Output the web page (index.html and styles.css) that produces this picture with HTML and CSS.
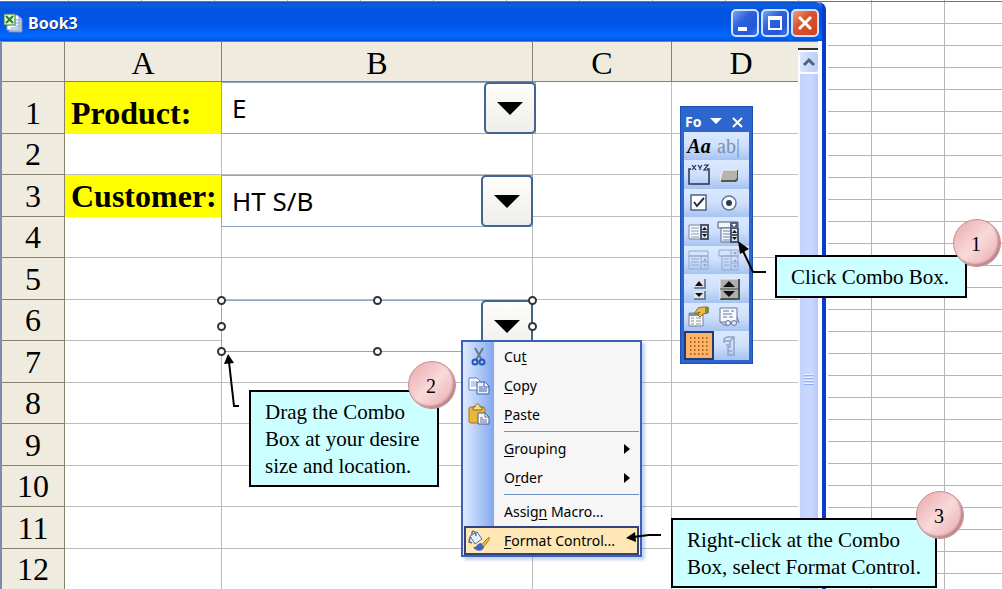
FILE: index.html
```html
<!DOCTYPE html>
<html lang="en">
<head>
    <meta charset="UTF-8">
    <meta name="viewport" content="width=device-width, initial-scale=1.0">
    <title>Book3</title>
    <link rel="stylesheet" href="styles.css">
</head>
<body>
    <main class="desktop">
        <section class="book">
            <header class="title-bar">
                <svg class="book-icon" width="20" height="20" viewBox="0 0 20 20">
                    <path d="M6 3h10l3 3v13H6z" fill="#b9cbe9" stroke="#6d87b5"/>
                    <path d="M4 2h10l2 2v13H4z" fill="#f4f8ff" stroke="#8fa6cc"/>
                    <path d="M12 7h5M12 10h5M12 13h5M8 15h7" stroke="#8ba4d0"/>
                    <rect x="1" y="1" width="11" height="11" fill="#e6f3dc" stroke="#2e7c35"/>
                    <path d="M3 3l7 7M10 3l-7 7" stroke="#23832c" stroke-width="2"/>
                </svg>
                <h1>Book3</h1>
                <div class="window-buttons">
                    <button class="window-btn" aria-label="Minimize">
                        <svg width="24" height="24" viewBox="0 0 24 24"><rect x="5" y="16" width="9" height="4" fill="#fff"/></svg>
                    </button>
                    <button class="window-btn" aria-label="Maximize">
                        <svg width="24" height="24" viewBox="0 0 24 24"><path d="M5 5h14v14H5zM7 9v8h10V9z" fill="#fff" fill-rule="evenodd"/></svg>
                    </button>
                    <button class="window-btn close" aria-label="Close">
                        <svg width="24" height="24" viewBox="0 0 24 24"><path d="M6 6l12 12M18 6L6 18" stroke="#fff" stroke-width="3"/></svg>
                    </button>
                </div>
            </header>

            <div class="book-body">
                <table class="sheet">
                    <colgroup>
                        <col class="col-head"><col class="col-a"><col class="col-b"><col class="col-c"><col>
                    </colgroup>
                    <thead>
                        <tr><th></th><th>A</th><th>B</th><th>C</th><th class="last">D</th></tr>
                    </thead>
                    <tbody>
                        <tr>
                            <th>1</th>
                            <td class="key"><label for="product">Product:</label></td>
                            <td class="has-combo">
                                <div class="combo combo-wide">
                                    <select id="product"><option>E</option></select>
                                    <span class="combo-arrow"></span>
                                </div>
                            </td>
                            <td></td><td></td>
                        </tr>
                        <tr><th>2</th><td></td><td></td><td></td><td></td></tr>
                        <tr>
                            <th>3</th>
                            <td class="key"><label for="customer">Customer:</label></td>
                            <td class="has-combo">
                                <div class="combo">
                                    <select id="customer"><option>HT S/B</option></select>
                                    <span class="combo-arrow"></span>
                                </div>
                            </td>
                            <td></td><td></td>
                        </tr>
                        <tr><th>4</th><td></td><td></td><td></td><td></td></tr>
                        <tr><th>5</th><td></td><td></td><td></td><td></td></tr>
                        <tr>
                            <th>6</th>
                            <td></td>
                            <td class="has-combo">
                                <div class="combo">
                                    <select aria-label="New combo box"></select>
                                    <span class="combo-arrow"></span>
                                    <i class="handle top left"></i>
                                    <i class="handle top center"></i>
                                    <i class="handle top right"></i>
                                    <i class="handle middle left"></i>
                                    <i class="handle middle right"></i>
                                    <i class="handle bottom left"></i>
                                    <i class="handle bottom center"></i>
                                </div>
                            </td>
                            <td></td><td></td>
                        </tr>
                        <tr><th>7</th><td></td><td></td><td></td><td></td></tr>
                        <tr><th>8</th><td></td><td></td><td></td><td></td></tr>
                        <tr><th>9</th><td></td><td></td><td></td><td></td></tr>
                        <tr><th>10</th><td></td><td></td><td></td><td></td></tr>
                        <tr><th>11</th><td></td><td></td><td></td><td></td></tr>
                        <tr><th>12</th><td></td><td></td><td></td><td></td></tr>
                    </tbody>
                </table>

                <div class="scrollbar">
                    <div class="split-box"></div>
                    <button class="scroll-up" aria-label="Scroll up">
                        <svg width="16" height="16" viewBox="0 0 16 16"><path d="M3 11l5-5 5 5" fill="none" stroke="#4d6185" stroke-width="3"/></svg>
                    </button>
                    <div class="thumb"><div class="grip"></div></div>
                </div>
            </div>
        </section>

        <!-- Forms toolbar -->
        <section class="toolbox">
            <header class="toolbox-title">
                <span>Fo</span>
                <button aria-label="Toolbar options">
                    <svg width="14" height="14" viewBox="0 0 14 14"><path d="M1 3h12l-6 6z" fill="#fff"/></svg>
                </button>
                <button aria-label="Close toolbar">
                    <svg width="14" height="14" viewBox="0 0 14 14"><path d="M2 3l9 9M11 3l-9 9" stroke="#fff" stroke-width="2"/></svg>
                </button>
            </header>
            <div class="tools">
                <button class="tool label-tool" aria-label="Label">Aa</button>
                <button class="tool edit-tool" aria-label="Edit Box">ab|</button>
                <button class="tool" aria-label="Group Box">
                    <svg width="24" height="24" viewBox="0 0 24 24"><path d="M4 6H2v15h20V6h-2" fill="none" stroke="#26334f" stroke-width="1.5"/><path d="M5 2l4 5M9 2l-4 5M11 2l2 3 2-3M13 5v2M17 2h4l-4 5h4" fill="none" stroke="#1b2b55" stroke-width="1.2"/></svg>
                </button>
                <button class="tool" aria-label="Button">
                    <svg width="24" height="24" viewBox="0 0 24 24"><path d="M6 7h15v10l-2 2H4v-3z" fill="#55554f"/><path d="M6 7h14v8l-2 2H3z" fill="#b4b4aa"/><path d="M3 17L6 7h14" fill="none" stroke="#f5f5f0"/></svg>
                </button>
                <button class="tool" aria-label="Check Box">
                    <svg width="24" height="24" viewBox="0 0 24 24"><path d="M4 4h15v15H4z" fill="#fff" stroke="#50627f" stroke-width="1.5"/><path d="M7 11l3 4 7-8" fill="none" stroke="#273248" stroke-width="2"/></svg>
                </button>
                <button class="tool" aria-label="Option Button">
                    <svg width="24" height="24" viewBox="0 0 24 24"><circle cx="12" cy="12" r="7" fill="#f8fbff" stroke="#647794" stroke-width="1.5"/><circle cx="12" cy="12" r="3" fill="#30394c"/></svg>
                </button>
                <button class="tool" aria-label="List Box">
                    <svg width="24" height="24" viewBox="0 0 24 24"><path d="M2 5h12v14H2z" fill="#f3f6fb" stroke="#7b8799"/><path d="M4 8h8M4 11h8M4 14h8M4 17h8" stroke="#93a0b5"/><path d="M13 4h9v16h-9z" fill="#48566e"/><path d="M15 6h5v5h-5zM15 13h5v5h-5z" fill="#dce5f3"/><path d="M15 10l2.500-3 2.500 3zM15 14h5l-2.500 3z" fill="#111"/></svg>
                </button>
                <button class="tool" aria-label="Combo Box">
                    <svg width="24" height="24" viewBox="0 0 24 24"><path d="M1 2h20v6H1z" fill="#f3f6fb" stroke="#4c5a73"/><path d="M13 2h8v6h-8z" fill="#4b6287"/><path d="M15 4h4l-2 3z" fill="#fff"/><path d="M4 8h17v14H4z" fill="#f3f6fb" stroke="#5d6b82"/><path d="M6 11h7M6 14h7M6 17h7M6 20h7" stroke="#73839d"/><path d="M13 8h9v15h-9z" fill="#48566e"/><path d="M15 9h5v5h-5zM15 16h5v5h-5z" fill="#dce5f3"/><path d="M15 13l2.500-3 2.500 3zM15 17h5l-2.500 3z" fill="#111"/></svg>
                </button>
                <button class="tool" aria-label="Combination List-Edit" disabled>
                    <svg width="24" height="24" viewBox="0 0 24 24" fill="none" stroke="#94a6cb"><path d="M2 3h19v5H2zM2 8h19v13H2zM14 8v13M14 14h7M4 11h8M4 14h8M4 17h8"/><path d="M16 13l2-3 2 3zM16 16h4l-2 3z" fill="#94a6cb" stroke="none"/></svg>
                </button>
                <button class="tool" aria-label="Combination Drop-Down Edit" disabled>
                    <svg width="24" height="24" viewBox="0 0 24 24" fill="none" stroke="#94a6cb"><path d="M2 2h19v6H2zM14 2v6M5 8h16v14H5zM14 8v14M14 15h7M7 11h5M7 14h5M7 17h5"/><path d="M16 4h4l-2 3zM16 14l2-3 2 3zM16 17h4l-2 3z" fill="#94a6cb" stroke="none"/></svg>
                </button>
                <button class="tool" aria-label="Scroll Bar">
                    <svg width="24" height="24" viewBox="0 0 24 24"><path d="M7 2h11v9H7zM7 14h11v8H7z" fill="#dfe3ea"/><path d="M7 11h11V2M7 22h11v-8" fill="none" stroke="#5c6779" stroke-width="1.5"/><path d="M8 9l4-5 4 5zM8 16h8l-4 4z" fill="#111"/></svg>
                </button>
                <button class="tool" aria-label="Spinner">
                    <svg width="24" height="24" viewBox="0 0 24 24"><path d="M3 2h19v20H3z" fill="#aeb0ae"/><path d="M3 22h19V2" fill="none" stroke="#4e5050" stroke-width="2"/><path d="M3 22V2h18" fill="none" stroke="#ecefef"/><path d="M6 10l6-6 6 6zM6 14h12l-6 6z" fill="#111"/><path d="M3 12h18" stroke="#4e5050"/></svg>
                </button>
                <button class="tool" aria-label="Control Properties">
                    <svg width="24" height="24" viewBox="0 0 24 24"><path d="M2 8h14v13H2z" fill="#fbfbf4" stroke="#71829d"/><path d="M2 8h14v3H2z" fill="#6f90c8"/><path d="M4 13h3M4 16h3M4 19h3M9 13h5M9 16h5M9 19h5" stroke="#8292a8"/><path d="M7 9l4-6 5-1h5v6l-5 1-3 3-2-2 2-3-3 1z" fill="#e6bd45" stroke="#967019"/><path d="M18 2h4v6h-4z" fill="#719057"/></svg>
                </button>
                <button class="tool" aria-label="Edit Code">
                    <svg width="24" height="24" viewBox="0 0 24 24"><path d="M3 3h17v14H3z" fill="#f6f9ff" stroke="#667996"/><path d="M6 6h6M14 6h3M6 9h9M6 12h4M12 12h4" stroke="#637591"/><circle cx="11" cy="18" r="2.5" fill="#e2e9f4" stroke="#627590"/><circle cx="17" cy="18" r="2.5" fill="#e2e9f4" stroke="#627590"/><path d="M3 17l4 3h3M20 12l2 6" fill="none" stroke="#667996"/></svg>
                </button>
                <button class="tool active" aria-label="Toggle Grid">
                    <svg width="24" height="24" viewBox="0 0 24 24"><path d="M3 4h20M3 8h20M3 12h20M3 16h20M3 20h20" stroke="#8e511d" stroke-width="1.5" stroke-dasharray="1.5 2.5"/></svg>
                </button>
                <button class="tool" aria-label="Run Dialog" disabled>
                    <svg width="24" height="24" viewBox="0 0 24 24" fill="none" stroke="#93a3c5" stroke-width="1.5"><path d="M7 9V5l3-2h7v18h-6v-8h3M7 7h6v4h-4M13 7l3-3M11 17h4"/></svg>
                </button>
            </div>
        </section>

        <!-- Shortcut menu -->
        <div class="menu">
            <button class="menu-item">
                <svg width="24" height="24" viewBox="0 0 24 24"><path d="M8 3l7 12M16 3L9 15" stroke="#66788f" stroke-width="2"/><circle cx="8" cy="17" r="2.5" fill="none" stroke="#2456b5" stroke-width="2"/><circle cx="15" cy="17" r="2.5" fill="none" stroke="#2456b5" stroke-width="2"/></svg>
                <span>Cu<u>t</u></span>
            </button>
            <button class="menu-item">
                <svg width="24" height="24" viewBox="0 0 24 24"><path d="M2 4h8l3 3v9H2z" fill="#fff" stroke="#6683b9"/><path d="M4 8h6M4 10h6M4 12h6" stroke="#87a1d2"/><path d="M10 8h8l4 4v8H10z" fill="#e9f1ff" stroke="#3d60a5"/><path d="M17 8v5h5M12 13h4M12 15h8M12 17h8" fill="none" stroke="#3d60a5"/></svg>
                <span><u>C</u>opy</span>
            </button>
            <button class="menu-item">
                <svg width="24" height="24" viewBox="0 0 24 24"><rect x="2" y="4" width="16" height="16" rx="2" fill="#e9b837" stroke="#9c7622"/><path d="M6 7V4h2c0-4 5-4 5 0h2v3z" fill="#f4dc80" stroke="#806632"/><path d="M11 10h7l4 4v7H11z" fill="#f3f6ff" stroke="#4d5d7d"/><path d="M18 10v4h4M13 15h3M13 17h7M13 19h7" fill="none" stroke="#5d6f96"/></svg>
                <span><u>P</u>aste</span>
            </button>
            <hr>
            <button class="menu-item submenu"><span><u>G</u>rouping</span></button>
            <button class="menu-item submenu"><span>O<u>r</u>der</span></button>
            <hr>
            <button class="menu-item"><span>Assig<u>n</u> Macro...</span></button>
            <button class="menu-item selected">
                <svg width="24" height="24" viewBox="0 0 24 24"><path d="M3 7l7-4 5 7-7 5z" fill="#eaf1ff" stroke="#4f6ea9"/><path d="M5 6c-1-5 4-5 4 1M3 8l-1 5 3 1" fill="none" stroke="#4f6ea9" stroke-width="1.5"/><path d="M22 8l-7 7-2 3 3 1 6-8z" fill="#e9b642" stroke="#b38629"/><path d="M14 14c-4 0-4 5-8 4 3 5 10 5 11 0z" fill="#3c67bd"/></svg>
                <span><u>F</u>ormat Control...</span>
            </button>
        </div>

        <!-- Steps -->
        <svg class="arrow arrow-1" width="32" height="36" viewBox="0 0 32 36"><path d="M30 32H17L7 11" fill="none" stroke="#000" stroke-width="2"/><path d="M2 1l11 8-9 5z"/></svg>
        <div class="callout callout-1">Click Combo Box.<span class="badge">1</span></div>

        <svg class="arrow arrow-2" width="20" height="56" viewBox="0 0 20 56"><path d="M18 53h-5L8 9" fill="none" stroke="#000" stroke-width="2"/><path d="M7 1l6 9-10 1z"/></svg>
        <div class="callout callout-2">Drag the Combo<br>Box at your desire<br>size and location.<span class="badge">2</span></div>

        <svg class="arrow arrow-3" width="38" height="14" viewBox="0 0 38 14"><path d="M36 5H24L8 7" fill="none" stroke="#000" stroke-width="2"/><path d="M1 8l9-6 1 10z"/></svg>
        <div class="callout callout-3">Right-click at the Combo<br>Box, select Format Control.<span class="badge">3</span></div>
    </main>
</body>
</html>
```

FILE: styles.css
```css
* {
    box-sizing: border-box;
}

body {
    margin: 0;
    overflow: hidden;
    font-family: 'Noto Sans', Tahoma, sans-serif;
    color: #000;
}

button {
    padding: 0;
    border: 0;
    background: none;
    font: inherit;
    color: inherit;
}

svg {
    display: block;
    flex: none;
}

/* worksheet behind the window */
.desktop {
    position: relative;
    height: 100vh;
    overflow: hidden;
    padding: 2px 176px 0 0;
    background:
        linear-gradient(#77776f, #77776f) 0 1px / 100% 1px no-repeat,
        repeating-linear-gradient(to right, transparent 0 72px, #b5b5b5 72px 73px) 72px 0,
        repeating-linear-gradient(to bottom, transparent 0 21px, #b5b5b5 21px 22px) 0 2px,
        #fff;
    background-position: 0 1px, -4px 0, 0 2px, 0 0;
}

.book {
    border: solid #0b3bcb;
    border-width: 0 4px 0 2px;
    border-left-color: #7f89ab;
    border-top-right-radius: 8px;
    background: #fff;
    box-shadow: 2px 0 0 #fff;
}

.title-bar {
    display: flex;
    align-items: center;
    gap: 5px;
    height: 39px;
    margin-left: -2px;
    padding: 2px 3px 0;
    border-top-right-radius: 6px;
    background: linear-gradient(#0a4fc4, #0c5fe2 8%, #0054e0 20%, #0056e8 60%, #0068ff 88%, #0052d8);
    color: #fff;
}

.title-bar h1 {
    margin: 0;
    flex: 1;
    font-size: 16px;
    font-weight: 700;
    line-height: 20px;
    text-shadow: 1px 1px #0b2f86;
}

.window-buttons {
    display: flex;
    gap: 2px;
}

.window-btn {
    display: grid;
    place-items: center;
    width: 28px;
    height: 28px;
    border: 2px solid #d3e2ff;
    border-radius: 5px;
    background: linear-gradient(135deg, #7da3f3, #2c61dd 40%, #2358d6 75%, #4279ee);
}

.window-btn.close {
    background: linear-gradient(135deg, #f0a089, #dd5330 40%, #d1421d);
}

.book-body {
    display: flex;
    align-items: flex-start;
}

/* sheet */
.sheet {
    flex: 1;
    width: 100%;
    table-layout: fixed;
    border-spacing: 0;
    font-family: 'Liberation Serif', 'Times New Roman', serif;
    font-size: 32px;
    line-height: 40px;
}

.col-head { width: 63px; }
.col-a { width: 157px; }
.col-b { width: 311px; }
.col-c { width: 139px; }

.sheet th,
.sheet td {
    height: 41px;
    padding: 0;
    border: solid #bcbcbc;
    border-width: 0 1px 1px 0;
    vertical-align: bottom;
}

.sheet th {
    background: #efebde;
    border-color: #85836f;
    font-weight: 400;
}

.sheet thead th {
    padding-top: 3px;
    border-top: 1px solid #85836f;
    line-height: 36px;
}

.sheet tbody tr:nth-child(odd) > * {
    height: 42px;
}

.sheet tbody tr:first-child > * {
    height: 52px;
}

.sheet th.last,
.sheet td:last-child {
    border-right: 0;
}

.sheet th.last {
    padding-left: 12px;
}

.sheet td.key {
    padding-left: 6px;
    background: #ff0;
    border-color: #ff0;
    font-weight: 700;
    white-space: nowrap;
}

/* combo boxes float over the cells */
.has-combo {
    position: relative;
}

.combo {
    position: absolute;
    top: 0;
    left: -1px;
    width: 312px;
    height: 52px;
    border: 1px solid #8fa6c8;
    background: #fff;
    z-index: 1;
}

.combo-wide {
    width: 315px;
}

.combo select {
    width: 100%;
    height: 100%;
    padding: 0 60px 0 10px;
    border: 0;
    appearance: none;
    background: none;
    color: #000;
    font: 26px/36px 'Noto Sans', Tahoma, sans-serif;
}

.combo-arrow {
    position: absolute;
    top: -1px;
    right: -1px;
    width: 52px;
    height: 52px;
    border: 2px solid #3f6590;
    border-radius: 5px;
    background: linear-gradient(#fdfdfb, #efeeea);
    pointer-events: none;
    display: grid;
    place-items: center;
}

.combo-arrow::before {
    content: '';
    border: solid transparent;
    border-width: 13px 13px 0;
    border-top-color: #000;
}

.handle {
    position: absolute;
    width: 9px;
    height: 9px;
    border: 2px solid #333;
    border-radius: 50%;
    background: #fff;
}

.handle.top { top: -5px; }
.handle.middle { top: 21px; }
.handle.bottom { bottom: -5px; }
.handle.left { left: -5px; }
.handle.center { left: 151px; }
.handle.right { right: -5px; }

/* scrollbar */
.scrollbar {
    width: 24px;
    height: 548px;
    overflow: hidden;
    padding-right: 4px;
    background: #fbfcff;
}

.split-box {
    height: 9px;
    border-top: 1px solid #85836f;
    border-bottom: 2px solid #33332b;
    background: #efebde;
}

.scroll-up {
    display: grid;
    place-items: center;
    width: 18px;
    height: 20px;
    margin: 2px 0 2px 2px;
    border-radius: 2px;
    background: linear-gradient(to right, #dbe5ff, #bccdf8);
}

.thumb {
    display: grid;
    place-items: center;
    height: 610px;
    margin-left: 2px;
    background: linear-gradient(to right, #c1d2fb, #cad8ff 60%, #b7c9f5);
}

.grip {
    width: 10px;
    height: 11px;
    background: repeating-linear-gradient(#eef4ff 0 1px, #8fb0f0 1px 2px, transparent 2px 3px);
}

/* forms toolbar */
.toolbox {
    position: absolute;
    top: 106px;
    left: 680px;
    width: 73px;
    padding: 0 3px 3px;
    border: 1px solid #1d4fae;
    background: #2e66cf;
    z-index: 2;
}

.toolbox-title {
    display: flex;
    align-items: center;
    justify-content: space-between;
    height: 25px;
    padding: 4px 4px 0 1px;
    color: #fff;
    font-size: 14px;
    font-weight: 700;
}

.tools {
    display: grid;
    grid-template-columns: 30px 1fr;
    grid-template-rows: repeat(4, 28px 29px);
}

.tool {
    display: grid;
    place-items: center;
    background: linear-gradient(#dbe9ff, #cfe0fc 50%, #a5c3f2);
}

.tool:nth-child(even) {
    padding-right: 6px;
}

.tool.active {
    border: 2px solid #24397d;
    background: #fdb264;
}

.label-tool {
    font: italic 700 20px 'Liberation Serif', serif;
}

.edit-tool {
    color: #7f8fae;
    font: 20px 'Liberation Serif', serif;
}

/* shortcut menu */
.menu {
    position: absolute;
    top: 340px;
    left: 461px;
    width: 181px;
    padding: 0 1px;
    border: 2px solid #3c5fb8;
    background: linear-gradient(to right, #dfeaff, #bcd2fb 12px, #82a7ee 31px, #f6f6f6 31px);
    box-shadow: 3px 3px 3px rgba(90, 130, 210, 0.35);
    z-index: 3;
}

.menu-item {
    display: grid;
    grid-template-columns: 24px 1fr;
    gap: 13px;
    align-items: center;
    width: 100%;
    height: 29px;
    padding-left: 3px;
    text-align: left;
    font-size: 14px;
    line-height: 20px;
}

.menu-item span {
    grid-column: 2;
}

.menu-item svg {
    grid-row: 1;
}

.menu u {
    text-underline-offset: 2px;
}

.submenu {
    grid-template-columns: 24px 1fr 15px;
}

.submenu::after {
    content: '';
    width: 0;
    border: solid transparent;
    border-width: 5px 0 5px 6px;
    border-left-color: #000;
}

.menu-item.selected {
    padding-left: 1px;
    border: 2px solid #34427c;
    background: #ffe8b5;
}

.menu hr {
    height: 1px;
    margin: 2px 0 2px 40px;
    border: 0;
    background: #7490c8;
}

/* step callouts */
.callout {
    position: absolute;
    padding: 7px 0 5px 14px;
    border: 2px solid #000;
    background: #cff;
    font-family: 'Liberation Serif', 'Times New Roman', serif;
    font-size: 21px;
    line-height: 27px;
    white-space: nowrap;
    z-index: 4;
}

.callout-1 {
    top: 255px;
    left: 775px;
    width: 192px;
}

.callout-2 {
    top: 390px;
    left: 249px;
    width: 190px;
}

.callout-3 {
    top: 518px;
    left: 671px;
    width: 266px;
}

.badge {
    position: absolute;
    top: -38px;
    right: -36px;
    display: grid;
    place-items: center;
    width: 48px;
    height: 48px;
    padding: 3px 2px 0 0;
    border: 1px solid #c78d93;
    border-radius: 50%;
    background: linear-gradient(135deg, #eaa6a9, #f8dadb 50%, #e9a5a8);
    box-shadow: inset -2px -2px 2px #b9868a;
    font-size: 20px;
}

.callout-2 .badge {
    top: -31px;
    right: -19px;
}

.callout-3 .badge {
    top: -29px;
    right: -29px;
}

.arrow {
    position: absolute;
    z-index: 4;
}

.arrow-1 { top: 240px; left: 736px; }
.arrow-2 { top: 353px; left: 221px; }
.arrow-3 { top: 530px; left: 625px; }
```
